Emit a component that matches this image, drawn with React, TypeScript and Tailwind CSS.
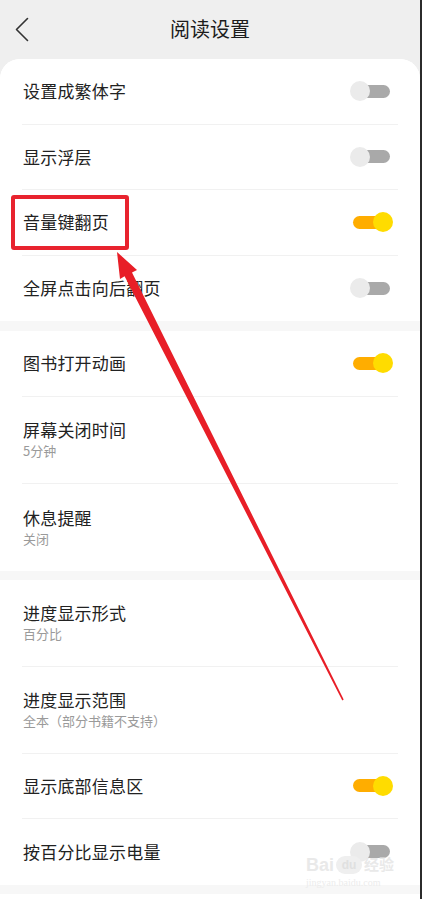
type Item = { title: string; sub?: string; toggle?: "on" | "off" };

const sections: Item[][] = [
  [
    { title: "设置成繁体字", toggle: "off" },
    { title: "显示浮层", toggle: "off" },
    { title: "音量键翻页", toggle: "on" },
    { title: "全屏点击向后翻页", toggle: "off" },
  ],
  [
    { title: "图书打开动画", toggle: "on" },
    { title: "屏幕关闭时间", sub: "5分钟" },
    { title: "休息提醒", sub: "关闭" },
  ],
  [
    { title: "进度显示形式", sub: "百分比" },
    { title: "进度显示范围", sub: "全本（部分书籍不支持）" },
    { title: "显示底部信息区", toggle: "on" },
    { title: "按百分比显示电量", toggle: "off" },
  ],
];

function Toggle({ on }: { on: boolean }) {
  return (
    <div className="relative w-[43px] h-5 shrink-0">
      {on ? (
        <>
          <div className="absolute left-[3px] top-[3.5px] w-[32px] h-[13px] rounded-full bg-[#ffad00]" />
          <div className="absolute left-[23px] top-0 w-5 h-5 rounded-full bg-[#ffdc00]" />
        </>
      ) : (
        <>
          <div className="absolute left-[10px] top-[3.5px] w-[30px] h-[13px] rounded-full bg-[#a9a9a9]" />
          <div className="absolute left-0 top-0 w-5 h-5 rounded-full bg-[#ebebeb]" />
        </>
      )}
    </div>
  );
}

function Row({ item, last, highlight }: { item: Item; last: boolean; highlight?: boolean }) {
  const h = item.sub ? "h-[87px]" : "h-[65.5px]";
  return (
    <div className={`${h} mx-[22px] flex items-center justify-between pl-[1px] pr-[5px] ${last ? "" : "border-b border-[#f1f1f1]"}`}>
      <div className="flex flex-col relative">
        <span className="text-[17px] leading-[22px] text-[#222] tracking-[0.2px]">{item.title}</span>
        {item.sub && <span className="text-[13px] leading-[18px] mt-[1px] text-[#9a9a9a]">{item.sub}</span>}
        {highlight && (
          <div className="absolute left-[-12px] top-[-16px] w-[118px] h-[55px] border-[4px] border-[#e8232e] rounded-[3px]" />
        )}
      </div>
      {item.toggle && <Toggle on={item.toggle === "on"} />}
    </div>
  );
}

export default function App() {
  return (
    <div
      className="relative w-[422px] h-[899px] overflow-hidden bg-white flex"
      style={{ fontFamily: '"Noto Sans CJK SC", "Noto Sans", sans-serif' }}
    >
      <div className="w-[420px] h-full flex flex-col bg-[#efefef]">
        {/* Header */}
        <div className="h-[59px] shrink-0 flex items-center relative">
          <svg className="absolute left-[14px] top-[17px]" width="16" height="25" viewBox="0 0 16 25" fill="none">
            <path d="M13.5 1.5 L2.5 12.5 L13.5 23.5" stroke="#333" strokeWidth="1.6" strokeLinecap="round" strokeLinejoin="round" />
          </svg>
          <div className="flex-1 text-center text-[20px] leading-[24px] text-[#1c1c1c] pb-[2px]">阅读设置</div>
        </div>

        {/* Body */}
        <div className="flex-1 bg-white rounded-t-[20px] overflow-hidden flex flex-col">
          {sections.map((sec, si) => (
            <div key={si} className="flex flex-col">
              <div className="bg-white">
                {sec.map((item, i) => (
                  <Row key={i} item={item} last={i === sec.length - 1} highlight={si === 0 && i === 2} />
                ))}
              </div>
              <div className={`${si === 0 ? "h-[10px]" : "h-[9px]"} bg-[#f7f7f7]`} />
            </div>
          ))}
          <div className="flex-1 bg-white" />
        </div>
      </div>
      <div className="w-[2px] h-full bg-[#2b2b2b]" />

      {/* Watermark */}
      <div className="absolute left-[306px] top-[855px] flex flex-col items-start pointer-events-none select-none">
        <div className="flex items-center gap-[2px] text-[18px] leading-[20px] font-bold text-[#e9e9e9]" style={{ fontFamily: '"Liberation Sans", "Noto Sans CJK SC", sans-serif' }}>
          <span>Bai</span>
          <span className="w-[26px] h-[18px] rounded-full bg-[#efefef] text-[12px] leading-[18px] text-center text-[#e0e0e0]">du</span>
          <span className="text-[15px]">经验</span>
        </div>
        <div className="text-[10px] leading-[14px] text-[#ececec] mt-[1px]" style={{ fontFamily: '"Liberation Serif", serif' }}>
          jingyan.baidu.com
        </div>
      </div>

      {/* Red arrow */}
      <svg className="absolute left-0 top-0 pointer-events-none" width="422" height="899" viewBox="0 0 422 899">
        <polygon
          points="117,252 137,270 132,272.6 343.7,699.6 342.3,700.4 124.6,276.2 120,279"
          fill="#e81e27"
        />
      </svg>
    </div>
  );
}
